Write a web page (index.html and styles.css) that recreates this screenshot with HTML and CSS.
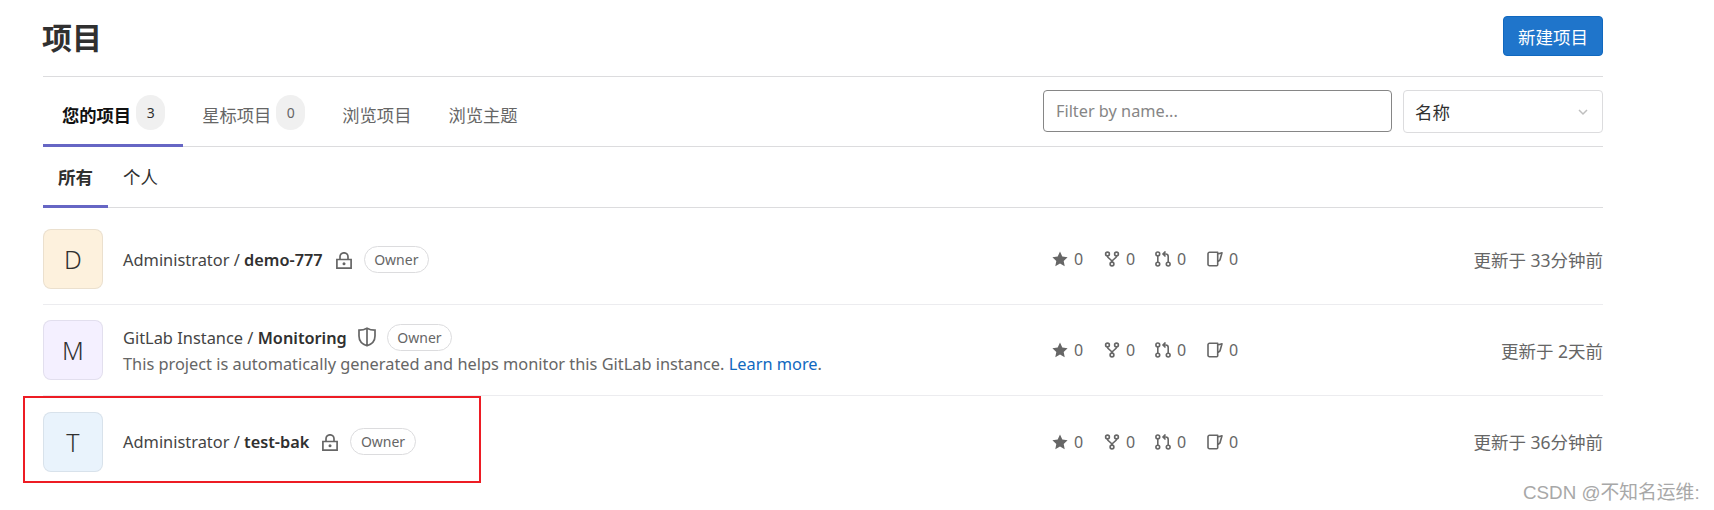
FILE: index.html
```html
<!DOCTYPE html>
<html lang="zh-CN">
<head>
    <meta charset="UTF-8">
    <meta name="viewport" content="width=device-width, initial-scale=1.0">
    <title>项目</title>
    <link rel="stylesheet" href="styles.css">
</head>
<body>
    <svg class="icon-defs" aria-hidden="true">
        <symbol id="i-lock" viewBox="0 0 16 17">
            <path fill="none" stroke="currentColor" stroke-width="1.7" d="M4 7.500V4.800a4 4 0 0 1 8 0v2.700M.9 7.500h14.200v8.600H.9z"/>
            <circle cx="8" cy="11.800" r="1.500" fill="currentColor"/>
        </symbol>
        <symbol id="i-shield" viewBox="0 0 18 20">
            <path fill="none" stroke="currentColor" stroke-width="1.7" d="M9 1.200c2.200 1.300 4.800 2 8 2v5.800c0 4.500-3.200 8.200-8 9.800C4.200 17.200 1 13.500 1 9V3.200c3.200 0 5.800-.7 8-2zM9 1.200v17.600"/>
        </symbol>
        <symbol id="i-star" viewBox="0 0 16 16">
            <path fill="currentColor" d="M8 .6l2.300 4.900 5.300.7-3.900 3.700 1 5.300L8 12.600l-4.700 2.600 1-5.300L.4 6.200l5.300-.7z"/>
        </symbol>
        <symbol id="i-fork" viewBox="0 0 16 16">
            <g fill="none" stroke="currentColor" stroke-width="1.6">
                <circle cx="3.500" cy="3" r="1.900"/>
                <circle cx="12.500" cy="3" r="1.900"/>
                <circle cx="8" cy="13" r="1.900"/>
                <path d="M3.500 5v.5C3.500 7.500 8 8 8 11M12.500 5v.5C12.500 7.500 8 8 8 11"/>
            </g>
        </symbol>
        <symbol id="i-mr" viewBox="0 0 16 16">
            <g fill="none" stroke="currentColor" stroke-width="1.600">
                <circle cx="2.800" cy="2.900" r="1.900"/>
                <circle cx="2.800" cy="13.100" r="1.900"/>
                <circle cx="13.200" cy="13.100" r="1.900"/>
                <path d="M2.800 4.900v6.200M13.200 11V5.500c0-1.500-.8-2.500-2.500-2.500H8.500M10.500.5L8 3l2.500 2.500"/>
            </g>
        </symbol>
        <symbol id="i-issue" viewBox="0 0 16 16">
            <path fill="none" stroke="currentColor" stroke-width="1.600" stroke-linejoin="round" d="M2.500 1.300h8.200v12.400a1 1 0 0 1-1 1H2.500a1.500 1.500 0 0 1-1.500-1.500V2.800a1.500 1.500 0 0 1 1.500-1.500zM10.700 3l4.300-1.200-2 7-2.300 2"/>
        </symbol>
    </svg>

    <div class="page">
        <header class="page-title">
            <h1>项目</h1>
            <a class="btn-new">新建项目</a>
        </header>

        <div class="top-bar">
            <ul class="tabs">
                <li class="tab active">您的项目<span class="count">3</span></li>
                <li class="tab">星标项目<span class="count">0</span></li>
                <li class="tab">浏览项目</li>
                <li class="tab">浏览主题</li>
            </ul>
            <div class="filters">
                <input class="filter-input" type="text" placeholder="Filter by name...">
                <div class="sort-select">
                    <span>名称</span>
                    <svg class="chevron" viewBox="0 0 12 12"><path fill="none" stroke="currentColor" stroke-width="1.500" d="M2 4l4 4 4-4"/></svg>
                </div>
            </div>
        </div>

        <ul class="sub-tabs">
            <li class="sub-tab active">所有</li>
            <li class="sub-tab">个人</li>
        </ul>

        <ul class="projects">
            <li class="project">
                <div class="avatar avatar-orange">D</div>
                <div class="project-main">
                    <div class="project-title">
                        <span class="project-name">Administrator / <b>demo-777</b></span>
                        <svg class="vis-icon"><use href="#i-lock"/></svg>
                        <span class="role">Owner</span>
                    </div>
                </div>
                <div class="stats">
                    <span class="stat stat-star"><svg><use href="#i-star"/></svg>0</span>
                    <span class="stat stat-fork"><svg><use href="#i-fork"/></svg>0</span>
                    <span class="stat stat-mr"><svg><use href="#i-mr"/></svg>0</span>
                    <span class="stat stat-issue"><svg><use href="#i-issue"/></svg>0</span>
                </div>
                <div class="updated">更新于 33分钟前</div>
            </li>
            <li class="project">
                <div class="avatar avatar-purple">M</div>
                <div class="project-main">
                    <div class="project-title">
                        <span class="project-name">GitLab Instance / <b>Monitoring</b></span>
                        <svg class="vis-icon shield"><use href="#i-shield"/></svg>
                        <span class="role">Owner</span>
                    </div>
                    <p class="project-desc">This project is automatically generated and helps monitor this GitLab instance. <a>Learn more</a>.</p>
                </div>
                <div class="stats">
                    <span class="stat stat-star"><svg><use href="#i-star"/></svg>0</span>
                    <span class="stat stat-fork"><svg><use href="#i-fork"/></svg>0</span>
                    <span class="stat stat-mr"><svg><use href="#i-mr"/></svg>0</span>
                    <span class="stat stat-issue"><svg><use href="#i-issue"/></svg>0</span>
                </div>
                <div class="updated">更新于 2天前</div>
            </li>
            <li class="project">
                <div class="avatar avatar-blue">T</div>
                <div class="project-main">
                    <div class="project-title">
                        <span class="project-name">Administrator / <b>test-bak</b></span>
                        <svg class="vis-icon"><use href="#i-lock"/></svg>
                        <span class="role">Owner</span>
                    </div>
                </div>
                <div class="stats">
                    <span class="stat stat-star"><svg><use href="#i-star"/></svg>0</span>
                    <span class="stat stat-fork"><svg><use href="#i-fork"/></svg>0</span>
                    <span class="stat stat-mr"><svg><use href="#i-mr"/></svg>0</span>
                    <span class="stat stat-issue"><svg><use href="#i-issue"/></svg>0</span>
                </div>
                <div class="updated">更新于 36分钟前</div>
            </li>
        </ul>
    </div>

    <div class="highlight-box"></div>
    <div class="watermark">CSDN @不知名运维:</div>
</body>
</html>
```

FILE: styles.css
```css
* {
    box-sizing: border-box;
}
body {
    margin: 0;
    background: #fff;
    color: #303030;
    font-family: "Noto Sans", "Noto Sans CJK SC", sans-serif;
    font-size: 16px;
    overflow: hidden;
}
ul {
    list-style: none;
    margin: 0;
    padding: 0;
}
.icon-defs {
    display: none;
}
.page {
    width: 1560px;
    margin-left: 43px;
}
.page-title {
    display: flex;
    justify-content: space-between;
    height: 77px;
    padding-top: 16px;
    border-bottom: 1px solid #dcdcde;
}
.page-title h1 {
    margin: 0 0 0 -1px;
    font-size: 30px;
    line-height: 44px;
    font-weight: 700;
}
.btn-new {
    display: flex;
    align-items: center;
    justify-content: center;
    width: 100px;
    height: 40px;
    font-size: 17.5px;
    color: #fff;
    background: #1f75cb;
    border: 1px solid #1068bf;
    border-radius: 4px;
}
.top-bar {
    display: flex;
    justify-content: space-between;
    height: 70px;
    border-bottom: 1px solid #dcdcde;
}
.tabs {
    display: flex;
}
.tab {
    display: flex;
    align-items: center;
    height: 70px;
    padding: 7px 18px 0 19px;
    font-size: 17.300px;
    color: #666;
    border-bottom: 3px solid transparent;
}
.tab.active {
    color: #111;
    font-weight: 700;
    border-bottom-color: #6666c4;
}
.count {
    display: flex;
    align-items: center;
    justify-content: center;
    width: 29px;
    height: 35px;
    margin-left: 5px;
    margin-top: -3px;
    font-size: 14px;
    font-weight: 400;
    color: #666;
    background: #f0f0f0;
    border-radius: 15px;
}
.tab.active .count {
    color: #303030;
}
.filters {
    display: flex;
    gap: 11px;
    padding-top: 13px;
}
.filter-input {
    width: 349px;
    height: 42px;
    padding: 0 12px;
    font-family: inherit;
    font-size: 16.300px;
    border: 1px solid #868686;
    border-radius: 4px;
    outline: none;
}
.filter-input::placeholder {
    color: #868686;
}
.sort-select {
    display: flex;
    align-items: center;
    justify-content: space-between;
    width: 200px;
    height: 43px;
    padding: 0 13px 0 11px;
    font-size: 17.5px;
    border: 1px solid #dcdcde;
    border-radius: 4px;
}
.chevron {
    width: 12px;
    height: 12px;
    color: #bfbfbf;
}
.sub-tabs {
    display: flex;
    height: 61px;
    border-bottom: 1px solid #dcdcde;
}
.sub-tab {
    display: flex;
    align-items: center;
    height: 61px;
    padding: 0 15px;
    font-size: 17.5px;
    border-bottom: 3px solid transparent;
}
.sub-tab.active {
    font-weight: 700;
    border-bottom-color: #6666c4;
}
.projects {
    padding-top: 6px;
}
.project {
    display: flex;
    align-items: center;
    padding: 15px 0;
    height: 91px;
    border-bottom: 1px solid #ececef;
}
.project:last-child {
    border-bottom: 0;
}
.avatar {
    display: flex;
    align-items: center;
    justify-content: center;
    flex-shrink: 0;
    width: 60px;
    height: 60px;
    margin-right: 20px;
    font-size: 25px;
    font-weight: 300;
    border: 1px solid rgba(31, 30, 36, 0.08);
    border-radius: 8px;
}
.avatar-orange {
    background: #fdf1dd;
}
.avatar-purple {
    background: #f4f0ff;
}
.avatar-blue {
    background: #e9f3fc;
}
.project-main {
    width: 929px;
}
.project-title {
    display: flex;
    align-items: center;
    height: 27px;
}
.project-name {
    font-size: 16.400px;
    color: #444;
}
.project-name b {
    font-size: 16.300px;
    color: #303030;
    font-weight: 600;
}
.vis-icon {
    width: 16px;
    height: 17px;
    margin: 2px 12px 0 13px;
    color: #666;
}
.vis-icon.shield {
    width: 18px;
    height: 20px;
    margin: 0 11px 0 11px;
}
.role {
    display: flex;
    align-items: center;
    height: 27px;
    padding: 0 9.500px;
    font-size: 14px;
    color: #666;
    border: 1px solid #dcdcde;
    border-radius: 14px;
}
.project-desc {
    margin: 0;
    font-size: 16.350px;
    line-height: 26px;
    color: #666;
}
.project-desc a {
    color: #1068bf;
}
.stats {
    display: flex;
    color: #666;
}
.stat {
    display: flex;
    align-items: center;
    gap: 6px;
}
.stat svg {
    width: 16px;
    height: 16px;
}
.stat-star {
    width: 52px;
}
.stat-fork {
    width: 51px;
}
.stat-mr {
    width: 52px;
}
.updated {
    flex: 1;
    font-size: 17.500px;
    text-align: right;
    color: #666;
}
/* annotation and watermark sit on top of the screenshot */
.highlight-box {
    position: absolute;
    left: 23px;
    top: 396px;
    width: 458px;
    height: 87px;
    border: 2px solid #ed1c24;
}
.watermark {
    position: absolute;
    left: 1523px;
    top: 480px;
    font-family: "Liberation Sans", "Noto Sans CJK SC", sans-serif;
    font-size: 18.800px;
    line-height: 26px;
    color: #a8a8a8;
    white-space: nowrap;
}
```
